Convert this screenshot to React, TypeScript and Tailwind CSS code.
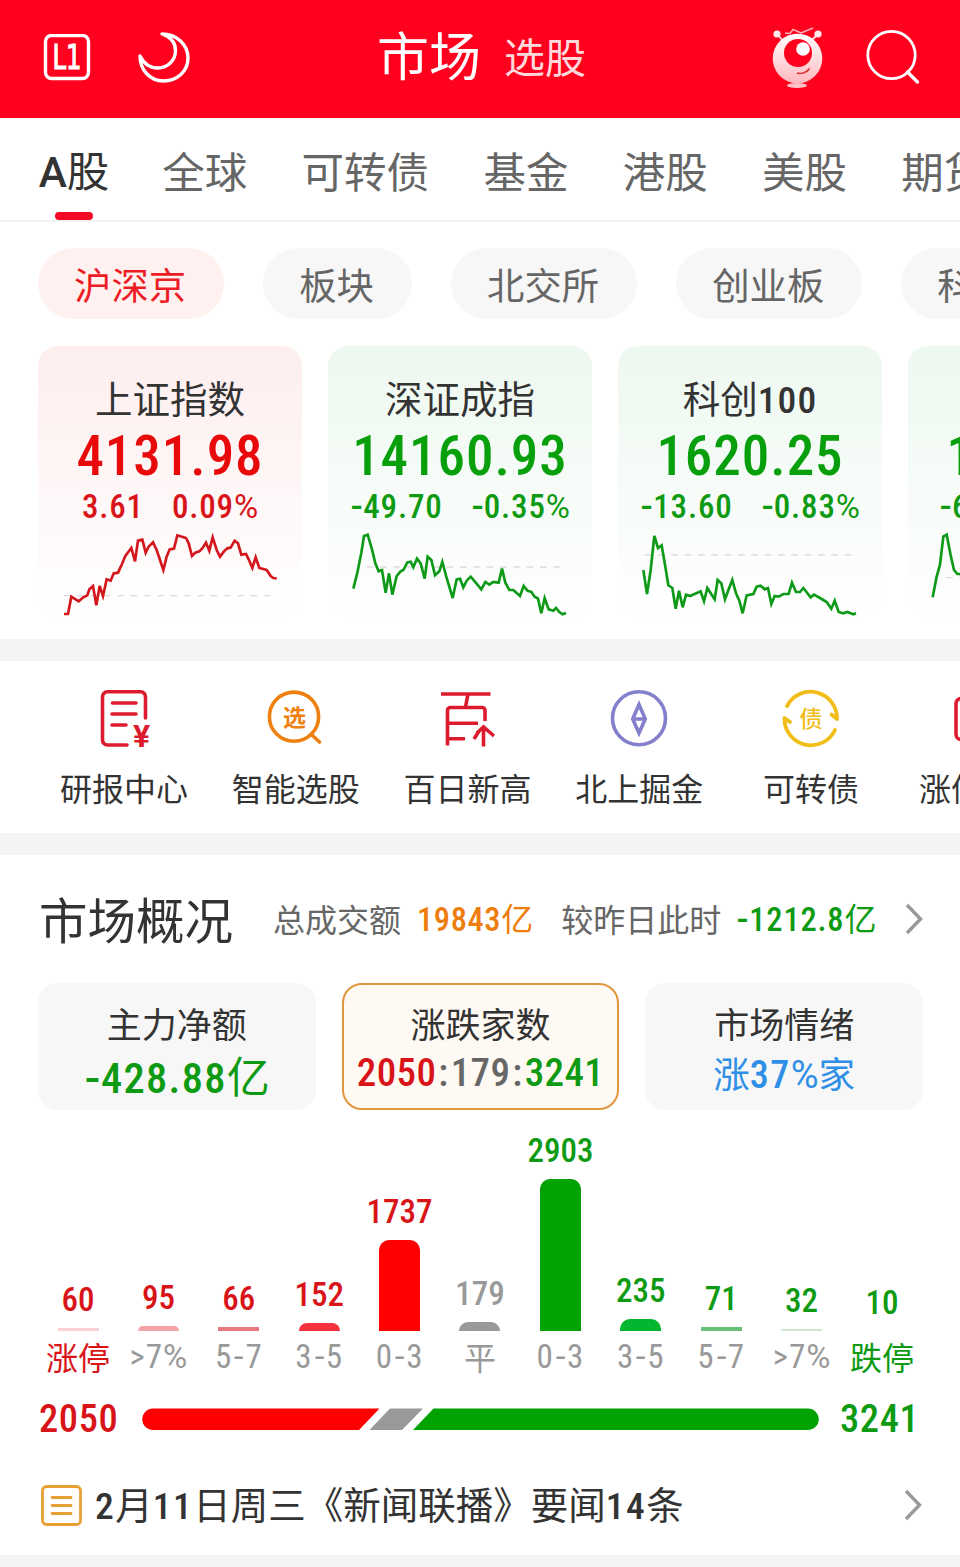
import { clsx } from "clsx";

const tabs = ["全球", "可转债", "基金", "港股", "美股", "期货"];
const boards = ["沪深京", "板块", "北交所", "创业板", "科创板"];

// Sparkline points share the coordinate space of each card's viewBox.
const indexes = [
  {
    name: "上证指数",
    value: "4131.98",
    change: "3.61",
    percent: "0.09%",
    up: true,
    viewBox: "114 594 792 270",
    base: "M192 797H820",
    points:
      "192,852 204,852 214,800 236,814 250,802 262,796 268,778 279,768 289,826 299,768 309,798 320,748 332,752 341,730 354,728 366,702 376,678 394,654 405,694 414,632 427,629 437,668 446,650 459,637 470,660 490,720 500,680 509,658 522,656 532,616 546,620 558,624 566,640 576,678 586,668 598,664 608,654 618,638 628,662 638,622 650,660 660,680 672,664 682,655 692,653 704,632 714,640 724,674 738,672 746,688 757,714 767,682 778,714 800,720 812,738 820,744 830,745",
  },
  {
    name: "深证成指",
    value: "14160.93",
    change: "-49.70",
    percent: "-0.35%",
    up: false,
    viewBox: "24 594 792 270",
    base: "M140 711H724",
    points:
      "100,776 112,728 124,668 132,618 143,614 156,658 166,700 176,724 186,720 197,788 207,730 217,794 230,738 242,724 250,720 262,697 272,695 280,712 291,686 302,700 314,746 323,680 334,690 345,736 358,724 367,696 380,744 398,804 410,748 420,746 430,772 440,752 452,740 464,754 484,778 496,756 508,764 520,756 536,758 546,716 556,758 568,780 580,780 600,798 611,768 622,782 634,786 644,800 654,806 664,850 674,804 686,838 700,842 708,834 718,846 728,853 738,849",
  },
  {
    name: "科创100",
    value: "1620.25",
    change: "-13.60",
    percent: "-0.83%",
    up: false,
    viewBox: "24 594 792 270",
    base: "M104 675H724",
    points:
      "100,720 111,792 122,720 133,618 144,654 155,646 166,710 175,766 187,774 197,836 207,782 218,832 228,794 240,798 272,784 282,814 292,774 314,808 323,750 334,760 345,808 356,778 367,750 378,790 388,812 398,850 410,796 430,792 440,770 452,767 464,778 474,774 484,822 494,798 506,800 520,792 536,792 546,758 558,786 570,786 580,774 602,802 612,794 630,804 650,816 664,836 674,812 686,846 700,850 712,846 730,853 738,850",
  },
  {
    name: "北证50",
    value: "1534.27",
    change: "-6.35",
    percent: "-0.41%",
    up: false,
    viewBox: "894 594 792 270",
    base: "M1008 743H1600",
    points: "968,802 980,740 990,704 1000,620 1010,614 1022,676 1032,720 1042,732 1050,732 1060,740",
  },
];

const distribution = [
  { count: 60, label: "涨停", height: 3, bar: "bg-[#fad0d3]", text: "text-[#d81419]", axis: "text-[#d81419]" },
  { count: 95, label: ">7%", height: 5, bar: "bg-[#f3a3a8]", text: "text-[#d81419]", axis: "text-[#999]" },
  { count: 66, label: "5-7", height: 4, bar: "bg-[#e8777e]", text: "text-[#d81419]", axis: "text-[#999]" },
  { count: 152, label: "3-5", height: 8, bar: "bg-[#f5303f]", text: "text-[#d81419]", axis: "text-[#999]" },
  { count: 1737, label: "0-3", height: 91, bar: "bg-[#ff0000]", text: "text-[#d81419]", axis: "text-[#999]" },
  { count: 179, label: "平", height: 9, bar: "bg-[#999]", text: "text-[#999]", axis: "text-[#999]" },
  { count: 2903, label: "0-3", height: 152, bar: "bg-[#02a202]", text: "text-[#0e9a12]", axis: "text-[#999]" },
  { count: 235, label: "3-5", height: 12, bar: "bg-[#04b52f]", text: "text-[#0e9a12]", axis: "text-[#999]" },
  { count: 71, label: "5-7", height: 4, bar: "bg-[#6abf78]", text: "text-[#0e9a12]", axis: "text-[#999]" },
  { count: 32, label: ">7%", height: 2, bar: "bg-[#cde9cf]", text: "text-[#0e9a12]", axis: "text-[#999]" },
  { count: 10, label: "跌停", height: 0, bar: "bg-transparent", text: "text-[#0e9a12]", axis: "text-[#0e9a12]" },
];

// Condensed figures; the signs around them stay wide.
function Num({ children, className }: { children: string | number; className?: string }) {
  return (
    <span className={clsx("[font-stretch:85%]", className)}>
      {String(children)
        .split(/([-%:])/)
        .filter(Boolean)
        .map((part, i) => {
          if (part === "-") {
            return (
              <span key={i} className="inline-block w-[0.4em] scale-x-125 text-center tracking-normal">
                -
              </span>
            );
          }
          if (part === "%") {
            return (
              <span key={i} className="font-normal tracking-normal [font-stretch:95%]">
                %
              </span>
            );
          }
          if (part === ":") {
            return (
              <span key={i} className="px-[2px]">
                :
              </span>
            );
          }
          return part;
        })}
    </span>
  );
}

function MoonIcon() {
  return (
    <svg width="56" height="56" viewBox="0 0 56 56" fill="none" stroke="#fff" strokeWidth="3.4" strokeLinejoin="round">
      <path d="M26 3C40 3 52 13 52 27C52 40.500 41 50 27.500 50C14 50 4 39 4 25C8 33 15 37 22 37C32 37 39.500 29 39.500 19.500C39.500 12 35 6 26 3Z" />
    </svg>
  );
}

function RobotIcon() {
  return (
    <svg width="60" height="68" viewBox="0 0 60 68" fill="none">
      <defs>
        <linearGradient id="robot" x1="0" y1="0" x2="0" y2="1">
          <stop offset="0" stopColor="#fff" />
          <stop offset="1" stopColor="#ffb9bf" />
        </linearGradient>
      </defs>
      <path d="M10 9 17 17M51 9 43 17" stroke="#ffdfe1" strokeWidth="1.800" />
      <circle cx="10" cy="9" r="3.600" fill="#ffe9ea" />
      <circle cx="51" cy="9" r="3.600" fill="#ffe9ea" />
      <path d="m18 8 5 .5 3-4L34 8l12-5" stroke="#ffb3b8" strokeWidth="1.500" />
      <circle cx="30.500" cy="33.500" r="24.800" fill="url(#robot)" />
      <circle cx="31" cy="28" r="14" fill="#ff001e" />
      <circle cx="36" cy="24" r="6.800" fill="#fff" />
      <path d="M30 48c5 1.500 10-.5 12.500-4.500" stroke="#d9363e" strokeWidth="1.600" />
      <ellipse cx="30" cy="60.500" rx="10" ry="2.500" fill="#ffc3c7" />
    </svg>
  );
}

function ReportIcon() {
  return (
    <svg width="60" height="60" viewBox="0 0 60 60" fill="none" stroke="#dc1c2e" strokeWidth="3.600" strokeLinecap="round">
      <path d="M51.500 30V9a5 5 0 0 0-5-5.200H13.500A5 5 0 0 0 8.500 9V52a5 5 0 0 0 5 5H33" />
      <path d="M18.500 15H42M18 26H42M18 37H32" />
      <text x="47.500" y="58.500" textAnchor="middle" fontSize="32" fontWeight="700" fill="#dc1c2e" stroke="none">
        ¥
      </text>
    </svg>
  );
}

function PickIcon() {
  return (
    <svg width="60" height="60" viewBox="0 0 60 60" fill="none" stroke="#ed800f" strokeWidth="3.600" strokeLinecap="round">
      <circle cx="28" cy="28.700" r="24.600" />
      <path d="m46 47 7.500 7" />
      <text x="28.500" y="37.500" textAnchor="middle" fontSize="23" fontWeight="700" fill="#ed800f" stroke="none">
        选
      </text>
    </svg>
  );
}

function HundredIcon() {
  return (
    <svg width="60" height="60" viewBox="0 0 60 60" fill="none" stroke="#dc1c2e" strokeWidth="3.600">
      <path d="M4 6H53.500M31 6 28.500 19M10.500 57.500V22.500a3 3 0 0 1 3-3H45a3 3 0 0 1 3 3V33M10.500 35.300H41M10.500 50.700H28" />
      <path d="m37 51 5-8M40 45l6.500-6L57 48M46.500 40V58.500" />
    </svg>
  );
}

function CompassIcon() {
  return (
    <svg width="60" height="60" viewBox="0 0 60 60" fill="none" stroke="#8580cc" strokeWidth="3.600">
      <circle cx="30" cy="30.300" r="26.500" />
      <path d="M30 16.500 36.300 31 30 45 23.700 31ZM23.700 31H36.300" strokeMiterlimit="8" />
    </svg>
  );
}

function BondIcon() {
  return (
    <svg width="60" height="60" viewBox="0 0 60 60" fill="none" stroke="#f1bd18" strokeWidth="3.800" strokeLinecap="round" strokeLinejoin="round">
      <path d="M6 18A26.500 26.500 0 0 1 56 31L50.500 26.500" />
      <path d="M54 42A26.500 26.500 0 0 1 3.500 30L9 34" />
      <text x="30" y="38.500" textAnchor="middle" fontSize="23" fontWeight="500" fill="#f1bd18" stroke="none">
        债
      </text>
    </svg>
  );
}

function LimitIcon() {
  return (
    <svg width="60" height="60" viewBox="0 0 60 60" fill="none" stroke="#dc1c2e" strokeWidth="3.600">
      <rect x="3" y="10.500" width="52" height="41" rx="5" />
    </svg>
  );
}

function Chevron() {
  return (
    <svg width="20" height="32" viewBox="0 0 20 32" fill="none" stroke="#999" strokeWidth="3.400">
      <path d="m3 2 13.500 14L3 30" />
    </svg>
  );
}

const shortcuts = [
  { label: "研报中心", icon: <ReportIcon /> },
  { label: "智能选股", icon: <PickIcon /> },
  { label: "百日新高", icon: <HundredIcon /> },
  { label: "北上掘金", icon: <CompassIcon /> },
  { label: "可转债", icon: <BondIcon /> },
  { label: "涨停聚焦", icon: <LimitIcon /> },
];

function Header() {
  return (
    <header className="flex h-[118px] items-center bg-[#ff001e] text-white">
      <svg className="ml-[42px] shrink-0" width="50" height="50" viewBox="0 0 50 50" fill="none">
        <rect x="3.500" y="1.500" width="43" height="43" rx="6" stroke="#fff" strokeWidth="3.400" />
        <text
          className="font-['DejaVu_Sans']"
          x="10.500"
          y="35"
          textLength="29"
          lengthAdjust="spacingAndGlyphs"
          fontSize="33"
          fill="#fff"
          stroke="#fff"
          strokeWidth="1.200"
        >
          L1
        </text>
      </svg>
      <div className="ml-[44px]">
        <MoonIcon />
      </div>
      <h1 className="ml-[185px] text-[52px] leading-[60px]">市场</h1>
      <span className="ml-[23px] text-[41px] leading-[60px] text-[#ffd9dc]">选股</span>
      <div className="ml-[181px] shrink-0">
        <RobotIcon />
      </div>
      <svg className="ml-[38px] shrink-0" width="58" height="60" viewBox="0 0 58 60" fill="none" stroke="#fff" strokeWidth="2.800">
        <circle cx="26.500" cy="26" r="23.700" />
        <path d="m42.500 43 10 10" strokeWidth="3.400" strokeLinecap="round" />
      </svg>
    </header>
  );
}

function IndexCard({ item }: { item: (typeof indexes)[number] }) {
  const tone = item.up ? "text-[#d81419]" : "text-[#0e9a12]";
  return (
    <article
      className={clsx(
        "flex h-[272px] w-[264px] shrink-0 flex-col items-center rounded-[20px] bg-linear-to-b to-white",
        item.up ? "from-[#feeeee]" : "from-[#edf8f0]",
      )}
    >
      <h2 className="mt-[29px] text-[37.500px] leading-[50px] text-[#333]">
        {item.name.replace(/\d+/, "")}
        <Num className="font-medium tracking-[0.03em]">{item.name.replace(/\D+/, "")}</Num>
      </h2>
      <Num
        className={clsx(
          "mt-[3px] text-[55px] font-medium leading-[56px] tracking-[0.018em]",
          item.up ? "text-[#e80a0a]" : "text-[#079f0b]",
        )}
      >
        {item.value}
      </Num>
      <div className={clsx("mt-[3px] flex gap-[28px] text-[33px] font-medium leading-[40px] tracking-[0.025em]", tone)}>
        <Num>{item.change}</Num>
        <Num>{item.percent}</Num>
      </div>
      <svg className="mt-[1px] shrink-0" width="264" height="90" viewBox={item.viewBox} fill="none">
        <path d={item.base} stroke="#dcdcdc" strokeWidth="4" strokeDasharray="20 20" />
        <polyline points={item.points} stroke={item.up ? "#d4161d" : "#0e9a18"} strokeWidth="8" />
      </svg>
    </article>
  );
}

function Overview() {
  return (
    <section className="flex h-[128px] items-center whitespace-nowrap pl-[39px] pr-[36px] pt-[3px] text-[32px] text-[#666]">
      <h2 className="pt-[5px] text-[48.500px] text-[#333]">市场概况</h2>
      <span className="ml-[40px]">总成交额</span>
      <span className="ml-[16px] text-[#ed7d0c]">
        <Num className="text-[32.500px] font-medium tracking-[0.018em]">19843</Num>亿
      </span>
      <span className="ml-[28px]">较昨日此时</span>
      <span className="ml-[15px] text-[#0e9a12]">
        <Num className="text-[32.500px] font-medium tracking-[0.025em]">-1212.8</Num>亿
      </span>
      <div className="ml-auto pb-[3px]">
        <Chevron />
      </div>
    </section>
  );
}

function SummaryCards() {
  return (
    <section className="mx-[38px] grid h-[127px] w-[885px] grid-cols-3 gap-[26px] whitespace-nowrap text-center">
      <div className="rounded-[20px] bg-[#f7f7f7] pt-[20px]">
        <h3 className="text-[35px] leading-[48px] text-[#333]">主力净额</h3>
        <p className="text-[43px] leading-[54px] text-[#0e9a12]">
          <Num className="text-[42.500px] font-medium tracking-[0.03em]">-428.88</Num>亿
        </p>
      </div>
      <div className="rounded-[20px] border-2 border-[#e2963c] bg-[#fff9f4] pt-[18px]">
        <h3 className="text-[35px] leading-[48px] text-[#333]">涨跌家数</h3>
        <p className="text-[39px] font-medium leading-[45px] tracking-[0.01em] text-[#666]">
          <Num className="text-[#d81419]">2050</Num>
          <Num>:179:</Num>
          <Num className="text-[#0e9a12]">3241</Num>
        </p>
      </div>
      <div className="rounded-[20px] bg-[#f7f7f7] pt-[20px]">
        <h3 className="text-[35px] leading-[48px] text-[#333]">市场情绪</h3>
        <p className="text-[36.500px] leading-[49px] text-[#2f8fe6]">
          涨<Num className="text-[38px] font-medium tracking-[0.04em]">37%</Num>家
        </p>
      </div>
    </section>
  );
}

function Distribution() {
  return (
    <section className="flex h-[270px] justify-center">
      {distribution.map((item, i) => (
        <div key={i} className="flex w-[80.400px] shrink-0 flex-col items-center justify-end">
          <Num className={clsx("mb-[8px] text-[33px] font-medium leading-[40px]", item.text)}>{item.count}</Num>
          <div
            className={clsx("w-[41px] shrink-0", item.bar, item.height > 4 && "rounded-t-[10px]")}
            style={{ height: item.height }}
          />
          {/[\u4e00-\u9fa5]/.test(item.label) ? (
            <span className={clsx("mt-[7px] h-[42px] text-[32px] leading-[42px]", item.axis)}>{item.label}</span>
          ) : (
            <Num className={clsx("mt-[5px] h-[44px] text-[33px] leading-[42px] tracking-[0.03em]", item.axis)}>
              {item.label}
            </Num>
          )}
        </div>
      ))}
    </section>
  );
}

export default function App() {
  return (
    <main className="flex h-[1567px] w-[960px] flex-col overflow-hidden bg-white font-['Roboto','Noto_Sans_CJK_SC',sans-serif] text-[#333]">
      <Header />

      <nav className="flex h-[104px] shrink-0 gap-[54.300px] overflow-hidden whitespace-nowrap border-b-2 border-[#f3f3f3] pl-[38px] text-[42.500px] leading-[112px] text-[#666]">
        <div className="-mr-[2px] flex w-[72px] shrink-0 flex-col items-center text-[#333]">
          <span className="h-[94px] leading-[109px]">
            <span className="font-medium">A</span>股
          </span>
          <span className="h-[8px] w-[38px] shrink-0 rounded-full bg-[#f20a22]" />
        </div>
        {tabs.map((tab) => (
          <span key={tab} className="shrink-0">
            {tab}
          </span>
        ))}
      </nav>

      <div className="flex shrink-0 gap-[39px] overflow-hidden pl-[38px] pt-[26px]">
        {boards.map((board, i) => (
          <span
            key={board}
            className={clsx(
              "h-[71px] shrink-0 rounded-full pl-[36px] pr-[38px] text-[37.400px] leading-[79px]",
              i === 0 ? "bg-[#fff1ef] text-[#ee1c25]" : "bg-[#f7f7f7] text-[#666]",
            )}
          >
            {board}
          </span>
        ))}
      </div>

      <section className="flex h-[320px] shrink-0 gap-[26px] overflow-hidden pl-[38px] pt-[27px]">
        {indexes.map((item) => (
          <IndexCard key={item.name} item={item} />
        ))}
      </section>

      <div className="h-[22px] shrink-0 bg-[#f4f4f4]" />

      <section className="flex h-[172px] shrink-0 overflow-hidden pl-[38px] pt-[27px]">
        {shortcuts.map((item) => (
          <div key={item.label} className="flex w-[171.800px] shrink-0 flex-col items-center">
            {item.icon}
            <span className="mt-[18px] text-[32px] leading-[48px]">{item.label}</span>
          </div>
        ))}
      </section>

      <div className="h-[22px] shrink-0 bg-[#f4f4f4]" />

      <Overview />
      <SummaryCards />
      <Distribution />

      <section className="flex h-[78px] shrink-0 items-center px-[39px] text-[38.500px] font-medium tracking-[0.015em]">
        <Num className="w-[103px] text-[#d81419]">2050</Num>
        <svg width="677" height="22" viewBox="0 0 677 22">
          <path d="M11 .5H237.500L217 22H11A10.750 10.750 0 0 1 11 .5Z" fill="#ff0000" />
          <path d="M248 .5H281L260 22H227.500Z" fill="#999" />
          <path d="M291.500 .5H666A10.750 10.750 0 0 1 666 22H271Z" fill="#02a202" />
        </svg>
        <Num className="ml-[21px] text-[#0e9a12]">3241</Num>
      </section>

      <section className="flex h-[97px] shrink-0 items-center pb-[3px] pl-[40px]">
        <svg width="43" height="43" viewBox="0 0 43 43" fill="none" stroke="#e8a035" strokeWidth="2.800" strokeLinecap="round">
          <rect x="2.500" y="2.500" width="38" height="38" rx="4" />
          <path d="M12 13.500H31M12 21.500H31M12 29.500H31" />
        </svg>
        <p className="ml-[12px] w-[808px] whitespace-nowrap pt-[3px] text-[37.500px]">
          <Num className="font-medium tracking-[0.04em]">2</Num>月
          <Num className="font-medium tracking-[0.04em]">11</Num>日周三《新闻联播》要闻
          <Num className="font-medium tracking-[0.04em]">14</Num>条
        </p>
        <Chevron />
      </section>

      <div className="h-[12px] shrink-0 bg-[#f4f4f4]" />
    </main>
  );
}
